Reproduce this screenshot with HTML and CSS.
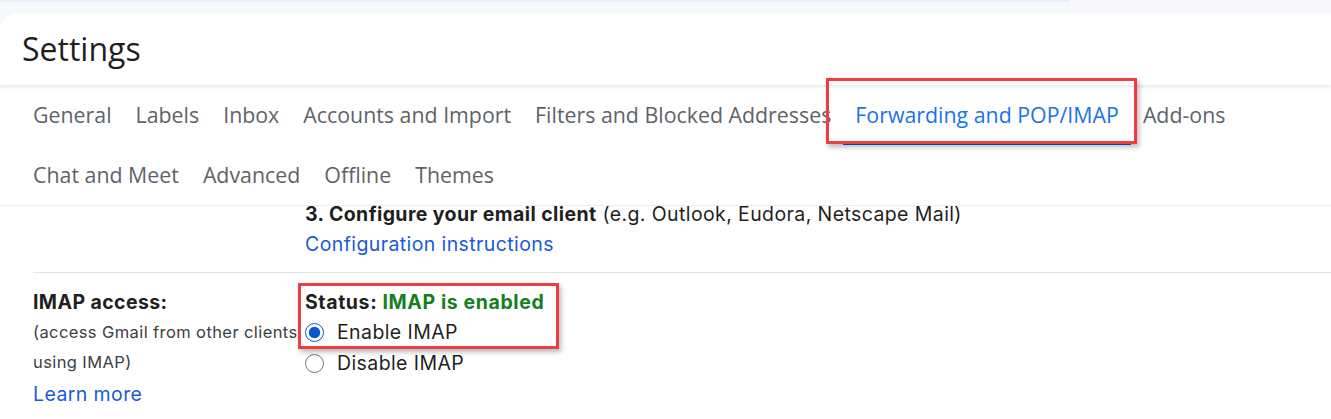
FILE: index.html
```html
<!DOCTYPE html>
<html lang="en">
<head>
  <meta charset="UTF-8">
  <meta name="viewport" content="width=device-width, initial-scale=1">
  <title>Settings</title>
  <link rel="stylesheet" href="styles.css">
</head>
<body>
  <div class="topbar"><div class="search-edge"></div></div>

  <div class="card">
    <div class="header">
      <h1>Settings</h1>
    </div>

    <div class="tabs">
      <a class="tab">General</a>
      <a class="tab">Labels</a>
      <a class="tab">Inbox</a>
      <a class="tab">Accounts and Import</a>
      <a class="tab">Filters and Blocked Addresses</a>
      <a class="tab active">Forwarding and POP/IMAP</a>
      <a class="tab">Add-ons</a>
      <a class="tab">Chat and Meet</a>
      <a class="tab">Advanced</a>
      <a class="tab">Offline</a>
      <a class="tab">Themes</a>
    </div>

    <div class="content">
      <div class="row first">
        <div class="label"></div>
        <div class="value">
          <div><strong>3. Configure your email client</strong> (e.g. Outlook, Eudora, Netscape Mail)</div>
          <a class="link">Configuration instructions</a>
        </div>
      </div>

      <div class="row">
        <div class="label">
          <div class="label-title">IMAP access:</div>
          <div class="label-note">(access Gmail from other clients using IMAP)</div>
          <a class="link">Learn more</a>
        </div>
        <div class="value">
          <div class="status"><strong>Status: <span class="ok">IMAP is enabled</span></strong></div>
          <label class="option"><input type="radio" name="imap" checked> Enable IMAP</label>
          <label class="option"><input type="radio" name="imap"> Disable IMAP</label>
        </div>
      </div>
    </div>
  </div>

  <div class="mark mark-tab"></div>
  <div class="mark mark-status"></div>
</body>
</html>
```

FILE: styles.css
```css
* { box-sizing: border-box; }
body {
  margin: 0;
  background: #f6f8fc;
  font-family: Inter, Roboto, sans-serif;
  color: #1f1f1f;
  overflow: hidden;
}
.topbar {
  height: 13px;
}
.search-edge {
  width: 1070px;
  height: 2px;
  background: #e9eef8;
}
.card {
  background: #fff;
  border-top-left-radius: 18px;
  height: 406px;
  overflow: hidden;
}
.header {
  height: 72px;
  padding-left: 22px;
  box-shadow: 0 2px 3px rgba(60, 64, 67, 0.12);
  position: relative;
}
h1 {
  margin: 0;
  font-family: 'Open Sans', sans-serif;
  font-weight: 400;
  font-size: 32px;
  line-height: 72px;
  color: #1f1f1f;
}
.tabs {
  display: flex;
  flex-wrap: wrap;
  padding-left: 21px;
  border-bottom: 1px solid #eceff1;
}
.tab {
  font-family: 'Open Sans', sans-serif;
  font-size: 21.35px;
  color: #5f6368;
  padding: 0 12px;
  height: 60px;
  line-height: 60px;
  border-bottom: 2px solid transparent;
  cursor: pointer;
}
.tab.active {
  color: #1a73e8;
  border-bottom-color: #0b57d0;
}
.content {
  padding-left: 33px;
  letter-spacing: 0.4px;
}
.row {
  display: flex;
  border-top: 1px solid #e3e3e3;
  padding-top: 14px;
}
.row.first {
  border-top: none;
  padding-top: 0;
  margin-top: -7px;
  height: 73px;
}
.label {
  width: 272px;
  flex-shrink: 0;
}
.value {
  font-size: 19.5px;
  line-height: 30px;
}
.status {
  letter-spacing: 0.6px;
}
.label-title {
  font-size: 19.5px;
  font-weight: 700;
  line-height: 30px;
}
.label-note {
  font-size: 16.5px;
  line-height: 30px;
  color: #3c4043;
  width: 272px;
}
.label .link {
  display: block;
  font-size: 19.5px;
  line-height: 34px;
}
.link {
  color: #1a5bd8;
  cursor: pointer;
}
.ok {
  color: #13801f;
}
.option {
  display: flex;
  align-items: center;
  gap: 13px;
  line-height: 31px;
}
.option input {
  margin: 0;
  width: 19px;
  height: 19px;
  accent-color: #0b57d0;
}
.mark {
  position: absolute;
  border: 3px solid #ef3b42;
  box-shadow: 2px 3px 5px rgba(0, 0, 0, 0.28);
}
.mark-tab {
  left: 826px;
  top: 78px;
  width: 311px;
  height: 66px;
}
.mark-status {
  left: 298px;
  top: 283px;
  width: 261px;
  height: 66px;
}
```
